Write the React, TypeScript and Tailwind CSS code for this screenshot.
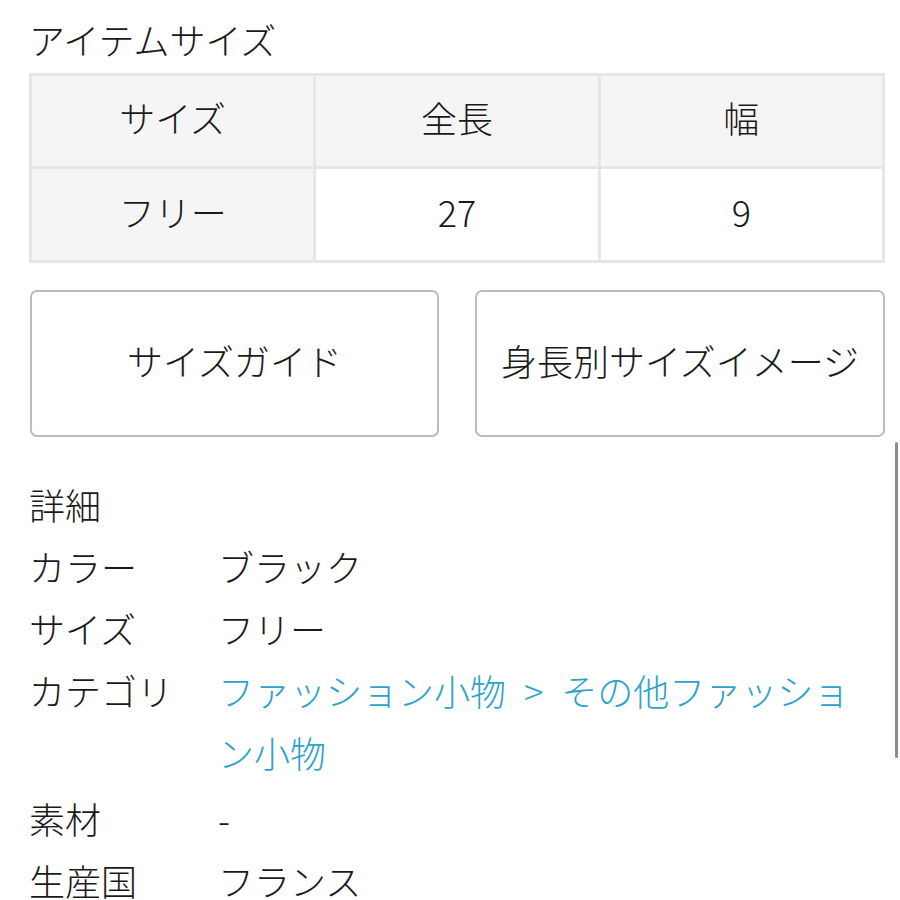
import React from "react";

const font = { fontFamily: '"Noto Sans CJK JP", "Noto Sans", sans-serif' };

export default function App() {
  const cell = "border-[3px] border-[#e6e6e6] text-center align-middle pb-[8px]";
  return (
    <div className="relative w-[900px] h-[900px] bg-white overflow-hidden text-[#1a1a1a] font-light" style={font}>
      <div className="pl-[29px] pr-[15px]">
        <div className="text-[36px] leading-[36px] pt-[21px] pb-[16px]">アイテムサイズ</div>
        <table className="w-full border-collapse border-[3px] border-[#e6e6e6] text-[36px] table-fixed">
          <tbody>
            <tr className="h-[93px]">
              <th className={cell + " bg-[#f5f5f5] font-light"}>サイズ</th>
              <th className={cell + " bg-[#f5f5f5] font-light"}>全長</th>
              <th className={cell + " bg-[#f5f5f5] font-light"}>幅</th>
            </tr>
            <tr className="h-[94px]">
              <th className={cell + " bg-[#f5f5f5] font-light"}>フリー</th>
              <td className={cell + " bg-white"}>27</td>
              <td className={cell + " bg-white"}>9</td>
            </tr>
          </tbody>
        </table>
        <div className="flex gap-[36px] mt-[27px] pl-[1px]">
          <button className="w-[409px] h-[147px] border-2 border-[#bcbcbc] rounded-[7px] bg-white text-[36px] font-light pb-[8px]" style={font}>
            サイズガイド
          </button>
          <button className="w-[410px] h-[147px] border-2 border-[#bcbcbc] rounded-[7px] bg-white text-[36px] font-light pb-[8px]" style={font}>
            身長別サイズイメージ
          </button>
        </div>
        <div className="mt-[36px] text-[36px] leading-[62px]">
          <div>詳細</div>
          <div className="flex">
            <div className="w-[189px] shrink-0">カラー</div>
            <div>ブラック</div>
          </div>
          <div className="flex">
            <div className="w-[189px] shrink-0">サイズ</div>
            <div>フリー</div>
          </div>
          <div className="flex">
            <div className="w-[189px] shrink-0">カテゴリ</div>
            <div className="w-[640px] text-[#2ba3cb]">
              {"ファッション小物\u2002>\u2002その他ファッション小物"}
            </div>
          </div>
          <div className="flex mt-[4px]">
            <div className="w-[189px] shrink-0">素材</div>
            <div>-</div>
          </div>
          <div className="flex">
            <div className="w-[189px] shrink-0">生産国</div>
            <div>フランス</div>
          </div>
        </div>
      </div>
      <div className="absolute left-[895px] top-[442px] w-[3px] h-[316px] rounded-full bg-[#8c8c8c]" />
    </div>
  );
}
